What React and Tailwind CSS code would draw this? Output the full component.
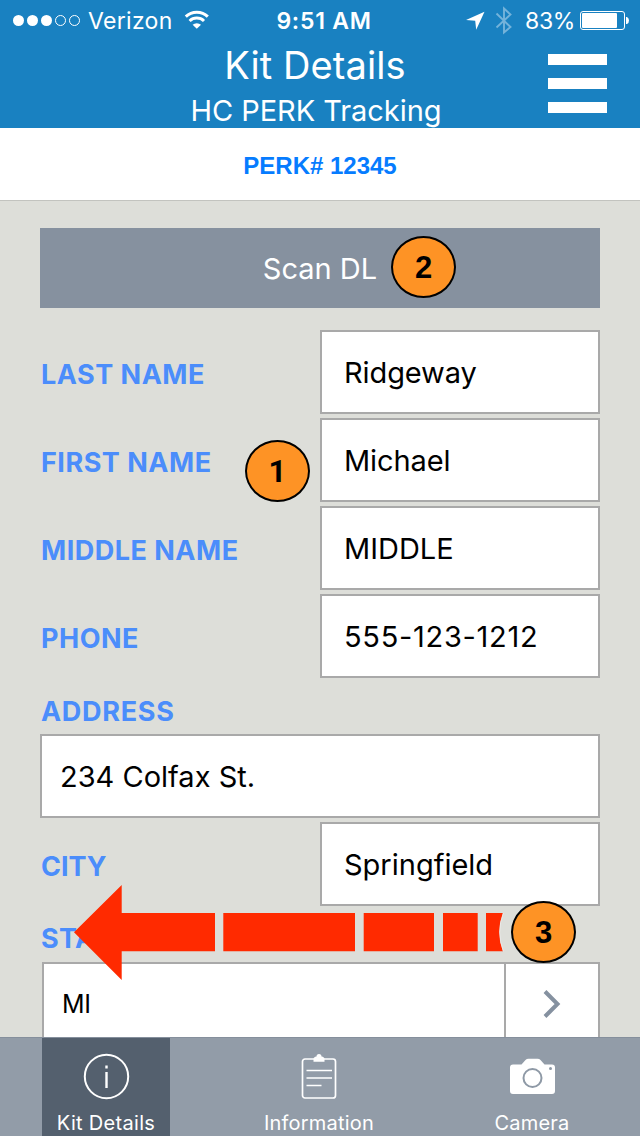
const SANS = "font-['Inter','Liberation_Sans',sans-serif]";

function StatusBar() {
  return (
    <div className="grid h-10 grid-cols-[1fr_auto_1fr] items-center">
      <div className="flex h-10 items-center">
        <svg className="ml-3 h-10 w-[70px]" viewBox="12 0 70 40" fill="white" stroke="white">
          <circle cx="18.5" cy="20.5" r="5.5" stroke="none" />
          <circle cx="32.5" cy="20.5" r="5.5" stroke="none" />
          <circle cx="46.5" cy="20.5" r="5.5" stroke="none" />
          <circle cx="60.5" cy="20.5" r="5" fill="none" />
          <circle cx="74.5" cy="20.5" r="5" fill="none" />
        </svg>
        <span className="ml-[6px] w-[84px] whitespace-nowrap pt-0.5 text-[23px] tracking-[0.3px]">Verizon</span>
        <svg className="ml-3 h-10 w-[26px]" viewBox="184 0 26 40" fill="none" stroke="white" strokeWidth="3">
          <path d="M185.8 16.6a15.800 15.800 0 0 1 22 0" />
          <path d="M189.6 21a10.400 10.400 0 0 1 14.400 0" />
          <path d="M196.800 28.800l-4.200-4a6.200 6.200 0 0 1 8.400 0z" fill="white" stroke="none" />
        </svg>
      </div>
      <span className="whitespace-nowrap pl-2 pt-0.5 text-[23px] font-semibold tracking-[0.75px]">9:51 AM</span>
      <div className="flex h-10 items-center justify-end">
        <svg className="h-10 w-[48px]" viewBox="465 0 48 40">
          <path d="M466 20L484.500 11.800L476.200 29.800L475.200 20.800z" fill="white" />
          <path d="M496.500 13.500L510.500 27L504 32.500V8.500L510.500 14.500L496.500 27.500" fill="none" stroke="#74b3da" strokeWidth="1.9" />
        </svg>
        <span className="ml-[12px] w-[49px] whitespace-nowrap pt-0.5 text-[23px] tracking-[-0.3px]">83%</span>
        <svg className="ml-[5px] mr-[10px] h-10 w-[51px]" viewBox="579 0 51 40">
          <rect x="580.5" y="11.5" width="44" height="18" rx="2.5" fill="none" stroke="white" />
          <rect x="582" y="13" width="35" height="15" rx="1" fill="white" />
          <path d="M626 17h1q2 1 2 3.500t-2 3.500h-1z" fill="white" />
        </svg>
      </div>
    </div>
  );
}

function Header() {
  return (
    <header className="relative h-32 shrink-0 bg-[#1981c1] text-white">
      <StatusBar />
      <div className="flex flex-col items-center whitespace-nowrap">
        <h1 className="-mt-0.5 pr-2.5 text-[38px] leading-[54px] tracking-[0.1px]">Kit Details</h1>
        <h2 className="pr-2 pt-px text-[29px] leading-9 tracking-[-0.05px]">HC PERK Tracking</h2>
      </div>
      <button aria-label="Menu" className="absolute right-[33px] top-[54px] flex w-[59px] flex-col gap-[13px]">
        <span className="h-[11px] bg-white" />
        <span className="h-[11px] bg-white" />
        <span className="h-[11px] bg-white" />
      </button>
    </header>
  );
}

const label = "whitespace-nowrap pl-px text-[27px] font-bold leading-8 text-[#4b8dfb]";
const box = "flex items-center whitespace-nowrap border-2 border-[#a9a9a9] bg-white pt-0.5 text-[29px] text-black";

function Row({ name, value, labelClass = "tracking-[0.5px]", valueClass = "tracking-[-0.1px]" }) {
  return (
    <div className="grid h-[84px] grid-cols-2 items-center">
      <span className={`${label} pt-1.5 ${labelClass}`}>{name}</span>
      <div className={`${box} h-full pl-[22px] ${valueClass}`}>{value}</div>
    </div>
  );
}

function Badge({ n, className }) {
  return (
    <div className={`absolute flex h-[62px] w-[65px] items-center justify-center rounded-[50%] border-2 border-black bg-[#fe9325] text-[31px] font-bold leading-none text-black ${className}`}>
      {n}
    </div>
  );
}

function SwipeArrow() {
  return (
    <svg className="absolute left-[73px] top-[884px] h-[97px] w-[432px]" viewBox="73 884 432 97" fill="#ff2a00">
      <path d="M74 932.300L121.700 885V913H215V951.300H121.700V980z" />
      <path d="M223.300 913H355V951.300H223.300z" />
      <path d="M363.700 913H434V951.300H363.700z" />
      <path d="M443 913H477.700V951.300H443z" />
      <path d="M486 913H503Q495.700 932 503 951.300H486z" />
      <path d="M503.300 913Q496 932 503.300 951.300" fill="none" stroke="#eee" strokeWidth="0.8" />
    </svg>
  );
}

function TabBar() {
  return (
    <nav className="flex h-[99px] shrink-0 border-t border-[#858f9c] bg-[#929ca8] pl-[42px] text-[20px] text-white">
      <div className="flex w-32 flex-col items-center bg-[#54606e]">
        <svg className="mt-[15px] h-[47px] w-[47px] shrink-0" viewBox="0 0 47 47" fill="none" stroke="white">
          <circle cx="23.500" cy="23.500" r="21.700" strokeWidth="2" />
          <path d="M23.500 19V35M23.500 12.500V15.500" strokeWidth="2.400" />
        </svg>
        <span className="mt-2 whitespace-nowrap leading-[30px] tracking-[0.3px]">Kit Details</span>
      </div>
      <div className="flex w-[298px] flex-col items-center">
        <svg className="mt-[15px] h-[47px] w-[36px] shrink-0" viewBox="0 0 36 47" fill="none" stroke="white">
          <rect x="1.500" y="6" width="33" height="39" rx="2.500" strokeWidth="1.700" />
          <path d="M12.500 8.700V6q0-2 3-2.500 0-2.500 2.500-2.500t2.500 2.500q3 .5 3 2.500v2.700z" fill="white" stroke="none" />
          <path d="M5.500 17.500H31M5.500 25H31M5.500 32.500H20.500" strokeWidth="1.700" />
        </svg>
        <span className="mt-2 whitespace-nowrap leading-[30px] tracking-[0.2px]">Information</span>
      </div>
      <div className="flex w-32 flex-col items-center">
        <svg className="mt-[15px] h-[47px] w-[47px] shrink-0" viewBox="0 0 47 47">
          <path d="M4 11.500h8.500l4-4.500q1.200-1.300 3-1.300h9q1.800 0 3 1.300l4 4.500H43q3 0 3 3V38q0 3-3 3H4q-3 0-3-3V14.500q0-3 3-3z" fill="white" />
          <circle cx="23.500" cy="25" r="9" fill="none" stroke="#8e99a6" strokeWidth="2" />
          <circle cx="41.500" cy="15.500" r="1.500" fill="#8e99a6" />
        </svg>
        <span className="mt-2 whitespace-nowrap leading-[30px] tracking-[0.2px]">Camera</span>
      </div>
    </nav>
  );
}

export default function App() {
  return (
    <div className={`relative flex h-[1136px] w-[640px] flex-col overflow-hidden bg-[#ddded9] ${SANS}`}>
      <Header />
      <div className="flex h-[73px] shrink-0 items-center justify-center border-b border-[#c2c3bf] bg-white pt-1 font-['Liberation_Sans',Arial,sans-serif] text-[24px] font-bold text-[#067cff]">
        PERK# 12345
      </div>
      <main className="flex min-h-0 flex-1 flex-col overflow-hidden px-10 pt-[27px]">
        <div className="flex h-20 shrink-0 items-center justify-center bg-[#86919f] pt-0.5 text-[29px] text-white">Scan DL</div>
        <div className="mt-[22px] flex shrink-0 flex-col gap-1">
          <Row name="LAST NAME" value="Ridgeway" />
          <Row name="FIRST NAME" value="Michael" />
          <Row name="MIDDLE NAME" value="MIDDLE" valueClass="tracking-normal" />
          <Row name="PHONE" value="555-123-1212" valueClass="tracking-[0.7px]" />
        </div>
        <span className={`${label} mt-[18px] tracking-[0.7px]`}>ADDRESS</span>
        <div className={`${box} mt-[6px] h-[84px] shrink-0 pl-[18px]`}>234 Colfax St.</div>
        <div className="mt-1 shrink-0">
          <Row name="CITY" value="Springfield" labelClass="tracking-normal" valueClass="tracking-normal" />
        </div>
        <span className={`${label} mt-[17px] tracking-[0.35px]`}>STATE</span>
        <div className={`${box} ml-0.5 mt-[7px] h-[84px] shrink-0 items-stretch !pt-0 text-[26px]`}>
          <span className="flex flex-1 items-center pl-[18px] pt-px !text-[25px] tracking-[-0.4px]">MI</span>
          <span className="flex w-[94px] items-center justify-center border-l-2 border-[#a9a9a9]">
            <svg className="h-[30px] w-[18px]" viewBox="0 0 18 30" fill="none" stroke="#8591a0" strokeWidth="4">
              <path d="M2 2.500L14.500 15L2 27.500" />
            </svg>
          </span>
        </div>
      </main>
      <TabBar />
      <SwipeArrow />
      <Badge n="2" className="left-[391px] top-[236px] font-['Liberation_Sans',Arial,sans-serif]" />
      <Badge n="1" className="left-[245px] top-[440px] font-['Roboto',sans-serif]" />
      <Badge n="3" className="left-[511px] top-[901px] font-['Liberation_Sans',Arial,sans-serif]" />
    </div>
  );
}
